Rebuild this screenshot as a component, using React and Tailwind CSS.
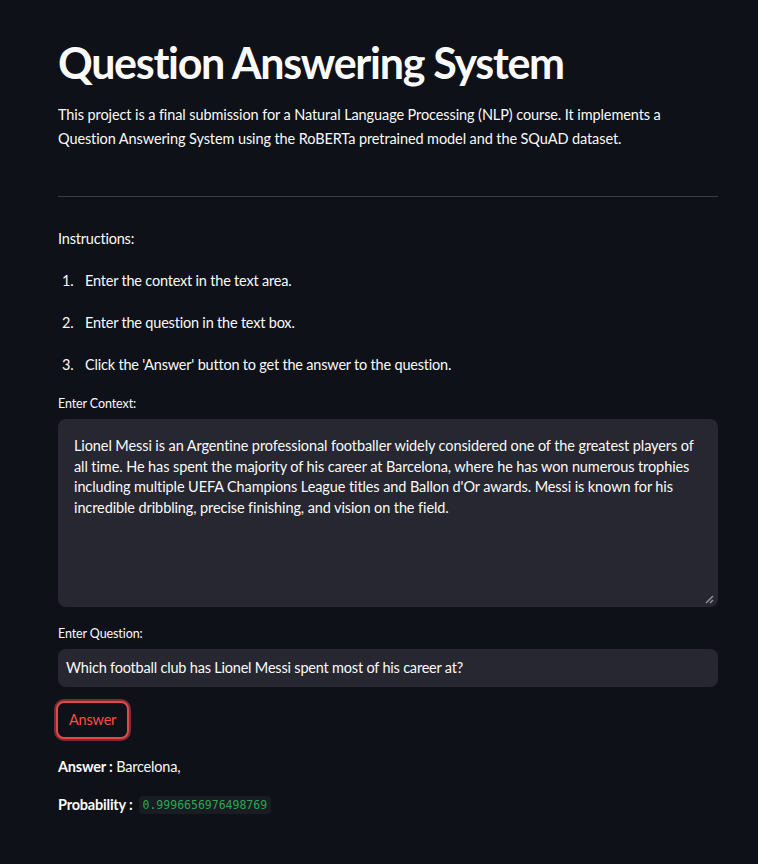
export default function App() {
  const font = { fontFamily: 'Lato, "Noto Sans", sans-serif' }
  return (
    <div className="min-h-[864px] bg-[#0e1117] text-[#fafafa]" style={font}>
      <div className="ml-[58px] w-[660px] pt-[35px] text-[14.5px] tracking-[-0.2px]">
        {/* Title */}
        <h1 className="text-[43px] font-bold leading-[56px] tracking-[-1.3px]">Question Answering System</h1>
        <p className="mt-[12px] leading-[24px] tracking-[-0.1px]">
          This project is a final submission for a Natural Language Processing (NLP) course. It implements a Question
          Answering System using the RoBERTa pretrained model and the SQuAD dataset.
        </p>
        <hr className="mt-[45px] border-0 border-t border-[#3b3d45]" />

        <p className="mt-[30px] leading-[24px]">Instructions:</p>
        <ol className="mt-[18px] flex flex-col gap-[18px] leading-[24px]">
          <li className="flex">
            <span className="w-[27px] pl-[4px]">1.</span>Enter the context in the text area.
          </li>
          <li className="flex">
            <span className="w-[27px] pl-[4px]">2.</span>Enter the question in the text box.
          </li>
          <li className="flex">
            <span className="w-[27px] pl-[4px]">3.</span>Click the 'Answer' button to get the answer to the question.
          </li>
        </ol>

        {/* Context */}
        <label className="mt-[17px] block text-[12.5px] leading-[20px] tracking-[-0.1px]">Enter Context:</label>
        <div className="relative mt-[5px] h-[188px] rounded-[8px] bg-[#262730] px-[16px] pt-[17px] leading-[20.7px] tracking-[-0.1px]">
          Lionel Messi is an Argentine professional footballer widely considered one of the greatest players of all time.
          He has spent the majority of his career at Barcelona, where he has won numerous trophies including multiple UEFA
          Champions League titles and Ballon d'Or awards. Messi is known for his incredible dribbling, precise finishing,
          and vision on the field.
          <svg className="absolute bottom-[3px] right-[4px]" width="9" height="9" viewBox="0 0 9 9">
            <path d="M8 1L1 8M8 5L5 8" stroke="#9a9ca3" strokeWidth="1.3" />
          </svg>
        </div>

        {/* Question */}
        <label className="mt-[17px] block text-[12.5px] leading-[20px] tracking-[-0.1px]">Enter Question:</label>
        <div className="mt-[5px] flex h-[38px] items-center rounded-[8px] bg-[#262730] px-[8px]">
          Which football club has Lionel Messi spent most of his career at?
        </div>

        {/* Button */}
        <button className="ml-[-2px] mt-[14px] h-[38px] rounded-[8px] border-2 border-[#e04a4f] bg-[#0e1117] px-[11px] text-[#ff4b4b] shadow-[0_0_0_2px_rgba(255,75,75,0.45)]">
          Answer
        </button>

        <p className="mt-[16px] leading-[24px]">
          <b>Answer :</b> Barcelona,
        </p>
        <p className="mt-[14px] flex items-center leading-[24px]">
          <b>Probability :</b>
          <code
            className="ml-[6px] rounded-[4px] bg-[#1a1c24] px-[4px] text-[11.5px] leading-[18px] tracking-normal text-[#29a84f]"
            style={{ fontFamily: '"DejaVu Sans Mono", monospace' }}
          >
            0.9996656976498769
          </code>
        </p>
      </div>
    </div>
  )
}
